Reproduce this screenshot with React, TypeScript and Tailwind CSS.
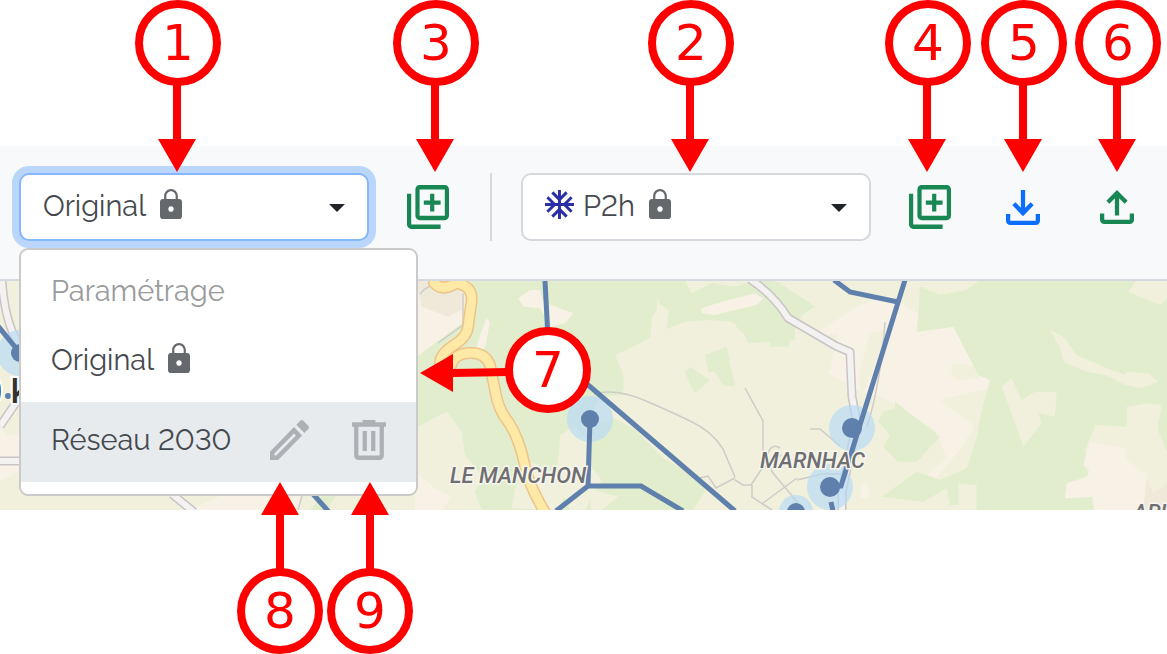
import type { ReactNode } from "react";

type IconProps = { className?: string };

function LockIcon() {
  return (
    <svg viewBox="4 1 16 21" preserveAspectRatio="none" className="mb-[5px] h-[30px] w-[22px] shrink-0 fill-[#65686c]" aria-hidden="true">
      <path d="M18 8h-1V6c0-2.76-2.24-5-5-5S7 3.240 7 6v2H6c-1.100 0-2 .9-2 2v10c0 1.100.9 2 2 2h12c1.100 0 2-.9 2-2V10c0-1.100-.9-2-2-2zm-6 9c-1.100 0-2-.9-2-2s.9-2 2-2 2 .9 2 2-.9 2-2 2zm3.400-9H8.600V6c0-1.880 1.520-3.400 3.400-3.400s3.400 1.520 3.400 3.400v2z" />
    </svg>
  );
}

function LibraryAddIcon() {
  return (
    <svg viewBox="2 2 20 20" preserveAspectRatio="none" className="h-[44px] w-[42px] fill-current" aria-hidden="true">
      <path d="M18 11h-3v3h-2v-3h-3V9h3V6h2v3h3v2zm2-7v12H8V4h12m0-2H8c-1.100 0-2 .9-2 2v12c0 1.100.9 2 2 2h12c1.100 0 2-.9 2-2V4c0-1.100-.9-2-2-2zM4 20h14v2H4c-1.100 0-2-.9-2-2V6h2v14z" />
    </svg>
  );
}

function DownloadIcon() {
  return (
    <svg viewBox="160 -800 640 640" preserveAspectRatio="none" className="h-[35px] w-[34px] fill-current" aria-hidden="true">
      <path d="M480-320 280-520l56-58 104 104v-326h80v326l104-104 56 58-200 200ZM240-160q-33 0-56.500-23.500T160-240v-120h80v120h480v-120h80v120q0 33-23.500 56.500T720-160H240Z" />
    </svg>
  );
}

function UploadIcon() {
  return (
    <svg viewBox="160 -800 640 640" preserveAspectRatio="none" className="h-[34px] w-[34px] fill-current" aria-hidden="true">
      <path d="M440-320v-326L336-542l-56-58 200-200 200 200-56 58-104-104v326h-80ZM240-160q-33 0-56.500-23.500T160-240v-120h80v120h480v-120h80v120q0 33-23.500 56.500T720-160H240Z" />
    </svg>
  );
}

function EditIcon() {
  return (
    <svg viewBox="3 3 18 18" preserveAspectRatio="none" className="h-[40px] w-[39px] fill-current" aria-hidden="true">
      <path d="M14.060 9.020l.92.920L5.920 19H5v-.92l9.060-9.060M17.660 3c-.25 0-.51.100-.7.290l-1.830 1.830 3.750 3.750 1.830-1.830c.39-.39.390-1.020 0-1.410l-2.340-2.340c-.2-.2-.45-.29-.71-.29zm-3.600 3.190L3 17.250V21h3.750L17.810 9.940l-3.750-3.750z" />
    </svg>
  );
}

function TrashIcon() {
  return (
    <svg viewBox="160 -840 640 720" preserveAspectRatio="none" className="h-[40px] w-[34px] fill-current" aria-hidden="true">
      <path d="M280-120q-33 0-56.500-23.500T200-200v-520h-40v-80h200v-40h240v40h200v80h-40v520q0 33-23.500 56.500T680-120H280Zm400-600H280v520h400v-520ZM360-280h80v-360h-80v360Zm160 0h80v-360h-80v360Z" />
    </svg>
  );
}

function SnowflakeIcon({ className }: IconProps) {
  return (
    <svg viewBox="2 2 20 20" className={className} aria-hidden="true">
      <path d="M22 11h-4.170l3.240-3.240-1.410-1.420L15 11h-2V9l4.660-4.660-1.420-1.410L13 6.170V2h-2v4.170L7.760 2.930 6.340 4.340 11 9v2H9L4.340 6.340 2.930 7.760 6.170 11H2v2h4.170l-3.240 3.240 1.410 1.420L9 13h2v2l-4.660 4.660 1.420 1.410L11 17.830V22h2v-4.170l3.240 3.240 1.420-1.410L13 15v-2h2l4.660 4.660 1.410-1.420L17.830 13H22z" />
    </svg>
  );
}

function SelectButton({ label, open, children }: { label: string; open?: boolean; children: ReactNode }) {
  return (
    <button
      type="button"
      aria-label={label}
      aria-haspopup="listbox"
      aria-expanded={open ? true : false}
      className={
        "flex h-[68px] w-[350px] items-center rounded-[10px] border-2 bg-white pr-[22px] pb-[2px] pl-[22px] " +
        (open ? "border-[#86b7fe] ring-[7px] ring-[#bbd6fb]" : "border-[#d5d9de]")
      }
    >
      {children}
      <svg viewBox="0 0 16 8" className="mt-[3px] ml-auto h-[8px] w-[16px] fill-[#212529]" aria-hidden="true">
        <path d="M0 0h16L8 8z" />
      </svg>
    </button>
  );
}

function IconButton({ label, className, children }: { label: string; className: string; children: ReactNode }) {
  return (
    <button type="button" aria-label={label} className={"flex h-[68px] w-[50px] shrink-0 items-center justify-center " + className}>
      {children}
    </button>
  );
}

function SettingsMenu() {
  return (
    <ul
      aria-label="Paramétrage"
      className="absolute top-[75px] left-0 z-10 w-[399px] rounded-[9px] border-2 border-[#c9cac9] bg-white pt-[12px] pb-[12px]"
    >
      <li className="flex h-[60px] items-center pb-[2px] pl-[30px] text-[#999b9d]">Paramétrage</li>
      <li>
        <button type="button" className="flex h-[80px] w-full items-center gap-[14px] pb-[4px] pl-[30px]">
          <span>Original</span>
          <LockIcon />
        </button>
      </li>
      <li className="flex h-[80px] items-center bg-[#e7ebee] pb-[4px] pl-[30px]">
        <button type="button" className="w-[219px] text-left">
          Réseau 2030
        </button>
        <button type="button" aria-label="Renommer" className="mr-[43px] text-[#adb1b5]">
          <EditIcon />
        </button>
        <button type="button" aria-label="Supprimer" className="text-[#adb1b5]">
          <TrashIcon />
        </button>
      </li>
    </ul>
  );
}

function Toolbar() {
  return (
    <header className="flex h-[135px] items-start border-b-2 border-[#d5dae0] bg-[#f8f9fb] pt-[27px] pl-[19px] text-[29px] leading-[36px] text-[#45494e] lining-nums">
      <div className="relative shrink-0">
        <SelectButton label="Paramétrage : Original" open>
          <span className="mr-[14px]">Original</span>
          <LockIcon />
        </SelectButton>
        <SettingsMenu />
      </div>
      <IconButton label="Dupliquer le paramétrage" className="ml-[34px] text-[#198754]">
        <LibraryAddIcon />
      </IconButton>
      <div className="ml-[37px] h-[68px] w-[2px] shrink-0 bg-[#d5d9de]" />
      <div className="ml-[29px] shrink-0">
        <SelectButton label="Scénario : P2h">
          <SnowflakeIcon className="mr-[9px] mb-[3px] h-[29px] w-[29px] fill-[#2a2fa5]" />
          <span className="mr-[14px]">P2h</span>
          <LockIcon />
        </SelectButton>
      </div>
      <IconButton label="Dupliquer le scénario" className="ml-[34px] text-[#198754]">
        <LibraryAddIcon />
      </IconButton>
      <IconButton label="Télécharger" className="ml-[43px] text-[#0d6efd]">
        <DownloadIcon />
      </IconButton>
      <IconButton label="Importer" className="ml-[44px] text-[#198754]">
        <UploadIcon />
      </IconButton>
    </header>
  );
}

function NetworkMap() {
  return (
    <svg
      viewBox="0 281 1167 229"
      preserveAspectRatio="xMinYMin slice"
      className="block h-[229px] w-full bg-[#f0f0dc]"
      role="img"
      aria-label="Carte du réseau"
    >
      {/* Land cover, centre */}
      <g transform="translate(415 275) scale(.33333)">
        <path fill="#f8f1e5" d="M0 15h150l-10 150-70 60-70 40zM0 600l60 40 60 30-30 35H0z" />
        <path fill="#efe9da" d="M0 15h140v90l-40 20-80-30z" />
        <path fill="#e1edcc" d="M170 15h640l20 40 60-30 70 10 60-20 40 0 80 60v120l-70 5-70 5-15-30-35-35-75-5-65 5-75 30-70 40-65 30 25 60 0 60-65 5-30 40-20 70 15 0 30-30 40-15 60 30 60 60 30 30 70 40 60 50-50 80H540l70-55-70-20-25-70 0-90-60-10-10 60 30 90 50 50 10 60-30 35H180l20-55-60-110-45-115-95 50V250l80-60 80-60z" />
        <path fill="#f0f0dc" d="M0 460l95-50 45 60 10 70 50 60-20 50 20 55H0zM290 700l10-60 50-80 60 30 50 50-30 65z" />
        <path fill="#f8f1e5" d="M345 45l30 0 10 35 90 35-25 30-45 10-30-55-50-5-15-25zM860 100l60-20 100-25 25 15-20 20-85 20-40 10-40-5zM215 130l10 10-15 80-30 10 15-50zM0 590l60 50 50 25-30 40H0z" />
        <path fill="#f0f0dc" d="M725 68l12 22 25 15-8 60-18 10 60 0 60 15-70 40-150 10 70-55 5-60 15-20zM890 155l75-10-40 40 15 30-25 5-30-30zM435 480l50-30 25 100 50 65-50 90h-45l-40-90z" />
        <path fill="#e1edcc" d="M825 275l60 40-45 40-30-60zM870 240l65-25 25 120-35-5-25-40-20 0z" />
      </g>
      {/* Land cover, east */}
      <g transform="translate(780 275) scale(.33333)">
        <path fill="#e1edcc" d="M-30 15L0 25l105 70-40 25-25 50-15 45h-55z" />
        <path fill="#f8f1e5" d="M235 90l95-30 90 60-5 50 110-15 70 145 35 15-30 115-65 100-70 85-25-15 60-50-35-85-160-100-70-20-90-50 30-120-80 10z" />
        <path fill="#f0f0dc" d="M270 175l50-10-50 140-25 60-10-60zM515 265l65 5 20 40-70 5-15-15zM480 375l150-35-30 130-20-20-60-45z" />
        <path fill="#e1edcc" d="M420 35l60 25 80-15 40-30h470l-25 35 95 40 21-20v460l-30-70 15-70-45-5-60 10v60l-95-5-25 70-10 50 20 30-70 25-5 45 85-5 5 40H590l0-75-55-5v65h-25l-10-50-70 40-125-15 105-75 70 25 80-35 30-90 10-60 30-115-35-15-75-145-110 15 5-45z" />
        <path fill="#e1edcc" d="M345 380l135 105-70 75h-55l-45-45 20-35-35-40 15-30 35-10z" />
        <path fill="#f0f0dc" d="M810 165l40 20 40 55 80 35 65 25 5-10 65 5 30 25-50 20-50-10-60-30-55-10-70-30-10-40zM665 335l30-25 30 65 40-25h65l-5 75-50-10 10 30-55 70zM1070 15h91v55l-20 20-95-40z" />
        <path fill="#f0f0dc" d="M1040 395l105-5-15 80 31 60v175H940l-10-100-15-80 30-70 95 5z" />
        <path fill="#f8f1e5" d="M930 500l110 20-5 30 65 50-10 105H945l-5-40-85 5 5-45 60-15 10-30-20-10zM245 625h20l5 45-30 0z" />
        <path fill="#efe9da" d="M1100 610l20 45 41-30v80h-71z" />
      </g>
      {/* Land cover, west */}
      <path fill="#f8f1e5" d="M0 420l6 16 14-2v36l-20 12zM190 510l30-14h80v14z" />
      <path fill="#e1edcc" d="M310 510l12-14h14l-10 14z" />
      {/* Minor roads */}
      <g fill="none" stroke="#cfccc8" strokeWidth="1.500">
        <path d="M594 394q22-6 52 7t44 20q22 10 33 28l12 28M700 478l8-2 8 12 19-10M735 480l8 5h8l10-15 20-15M745 388l18 33v30l10 22 25 30M763 503l34-25M752 485v12l20 13M780 448q-8-5-12 5M438 343l25-18v-32M810 429h10l20 17M797 480l25-6h20M885 322q-4 60-18 105" />
        <path d="M302 496l-4 14M420 294q12-14 30-10" />
      </g>
      {/* Secondary roads */}
      <g fill="none" strokeLinejoin="round">
        <path stroke="#c9c5c6" strokeWidth="9" d="M750 279q25 17 38 39l48 28 14 6 2 45 5 25-15 70v30M2 281q2 30 10 50l15 30M0 461h22M0 426l22-32M172 494l22 18" />
        <path stroke="#f4f2f1" strokeWidth="6" d="M750 279q25 17 38 39l48 28 14 6 2 45 5 25-15 70v30M2 281q2 30 10 50l15 30M0 461h22M0 426l22-32M172 494l22 18" />
      </g>
      {/* Main road */}
      <g fill="none" strokeLinecap="round">
        <path stroke="#eec38a" strokeWidth="12" d="M434 283q9 9 22 0 19 3 15 22l-3 22q-1 10-14 18-14 9-14 18M451 366q2-12 18-13 16-1 21 12l5 25q3 20 14 33 10 15 16 43 4 20 21 48" />
        <path stroke="#ffe9a6" strokeWidth="9" d="M434 283q9 9 22 0 19 3 15 22l-3 22q-1 10-14 18-14 9-14 18M451 366q2-12 18-13 16-1 21 12l5 25q3 20 14 33 10 15 16 43 4 20 21 48" />
      </g>
      {/* Network nodes and pipes */}
      <g fill="#b6d8f8" fillOpacity=".65">
        <circle cx="590" cy="419" r="23" />
        <circle cx="852" cy="428" r="23" />
        <circle cx="830" cy="487" r="23" />
        <circle cx="796" cy="512" r="17" />
        <circle cx="20" cy="353" r="23" />
      </g>
      <g fill="none" stroke="#5f7fac" strokeWidth="5">
        <path d="M545 281l4 75M580 378l155 133M590 419l-2 67-32 25M588 486h53l42 25M834 280l16 12 48 10M905 280l-64 206h-11M852 428h9M831 502l2 9M-2 326l22 27M313 494l16 18" />
      </g>
      <g fill="#5f7fac">
        <circle cx="590" cy="419" r="9" />
        <circle cx="852" cy="428" r="10" />
        <circle cx="830" cy="487" r="10" />
        <circle cx="796" cy="512" r="9" />
        <circle cx="20" cy="353" r="9" />
        <circle cx="8" cy="396" r="3" />
      </g>
      {/* Place names */}
      <g className="font-['Roboto',sans-serif] text-[22px] font-medium italic" fill="#6f6f72" stroke="#f7f6ee" strokeWidth="3" paintOrder="stroke">
        <text x="450" y="483">LE MANCHON</text>
        <text x="760" y="468">MARNHAC</text>
        <text x="1133" y="520">ARL</text>
      </g>
      <text x="-17" y="403" className="font-['Roboto',sans-serif] text-[34px] font-medium" fill="#333" stroke="#fff" strokeWidth="4" paintOrder="stroke">
        0 k
      </text>
    </svg>
  );
}

function Badge({ n }: { n: number }) {
  return (
    <div className="flex h-[86px] w-[86px] shrink-0 items-center justify-center rounded-full border-8 border-[#ff0000] bg-white font-['DejaVu_Sans',sans-serif] text-[50px] leading-none text-[#ff0000]">
      {n}
    </div>
  );
}

function Shaft({ className }: IconProps) {
  return (
    <svg viewBox="0 0 38 89" className={"h-[89px] w-[38px] shrink-0 fill-[#ff0000] " + className} aria-hidden="true">
      <path d="M15 0h8v56h15L19 89 0 56h15z" />
    </svg>
  );
}

function CalloutDown({ n, className }: { n: number; className: string }) {
  return (
    <div className={"absolute top-0 flex w-[86px] flex-col items-start " + className}>
      <Badge n={n} />
      <Shaft className="-mt-[3px] ml-[23px]" />
    </div>
  );
}

function CalloutUp({ n, className }: { n: number; className: string }) {
  return (
    <div className={"absolute top-[482px] flex w-[86px] flex-col items-center " + className}>
      <Shaft className="-mb-[3px] rotate-180" />
      <Badge n={n} />
    </div>
  );
}

function CalloutLeft({ n, className }: { n: number; className: string }) {
  return (
    <div className={"absolute flex items-start " + className}>
      <svg viewBox="0 0 88 38" className="mt-[27px] -mr-[3px] h-[38px] w-[88px] shrink-0 fill-[#ff0000]" aria-hidden="true">
        <path d="M88 14v8L33 23v15L0 19 33 0v15z" />
      </svg>
      <Badge n={n} />
    </div>
  );
}

export default function App() {
  return (
    <main className="relative min-h-screen overflow-hidden bg-white pt-[146px] font-['Raleway','Lato',sans-serif]">
      <Toolbar />
      <NetworkMap />
      <div className="pointer-events-none absolute inset-0 z-20">
        <CalloutDown n={1} className="left-[135px]" />
        <CalloutDown n={3} className="left-[393px]" />
        <CalloutDown n={2} className="left-[648px]" />
        <CalloutDown n={4} className="left-[885px]" />
        <CalloutDown n={5} className="left-[981px]" />
        <CalloutDown n={6} className="left-[1075px]" />
        <CalloutLeft n={7} className="top-[327px] left-[420px]" />
        <CalloutUp n={8} className="left-[237px]" />
        <CalloutUp n={9} className="left-[327px]" />
      </div>
    </main>
  );
}
